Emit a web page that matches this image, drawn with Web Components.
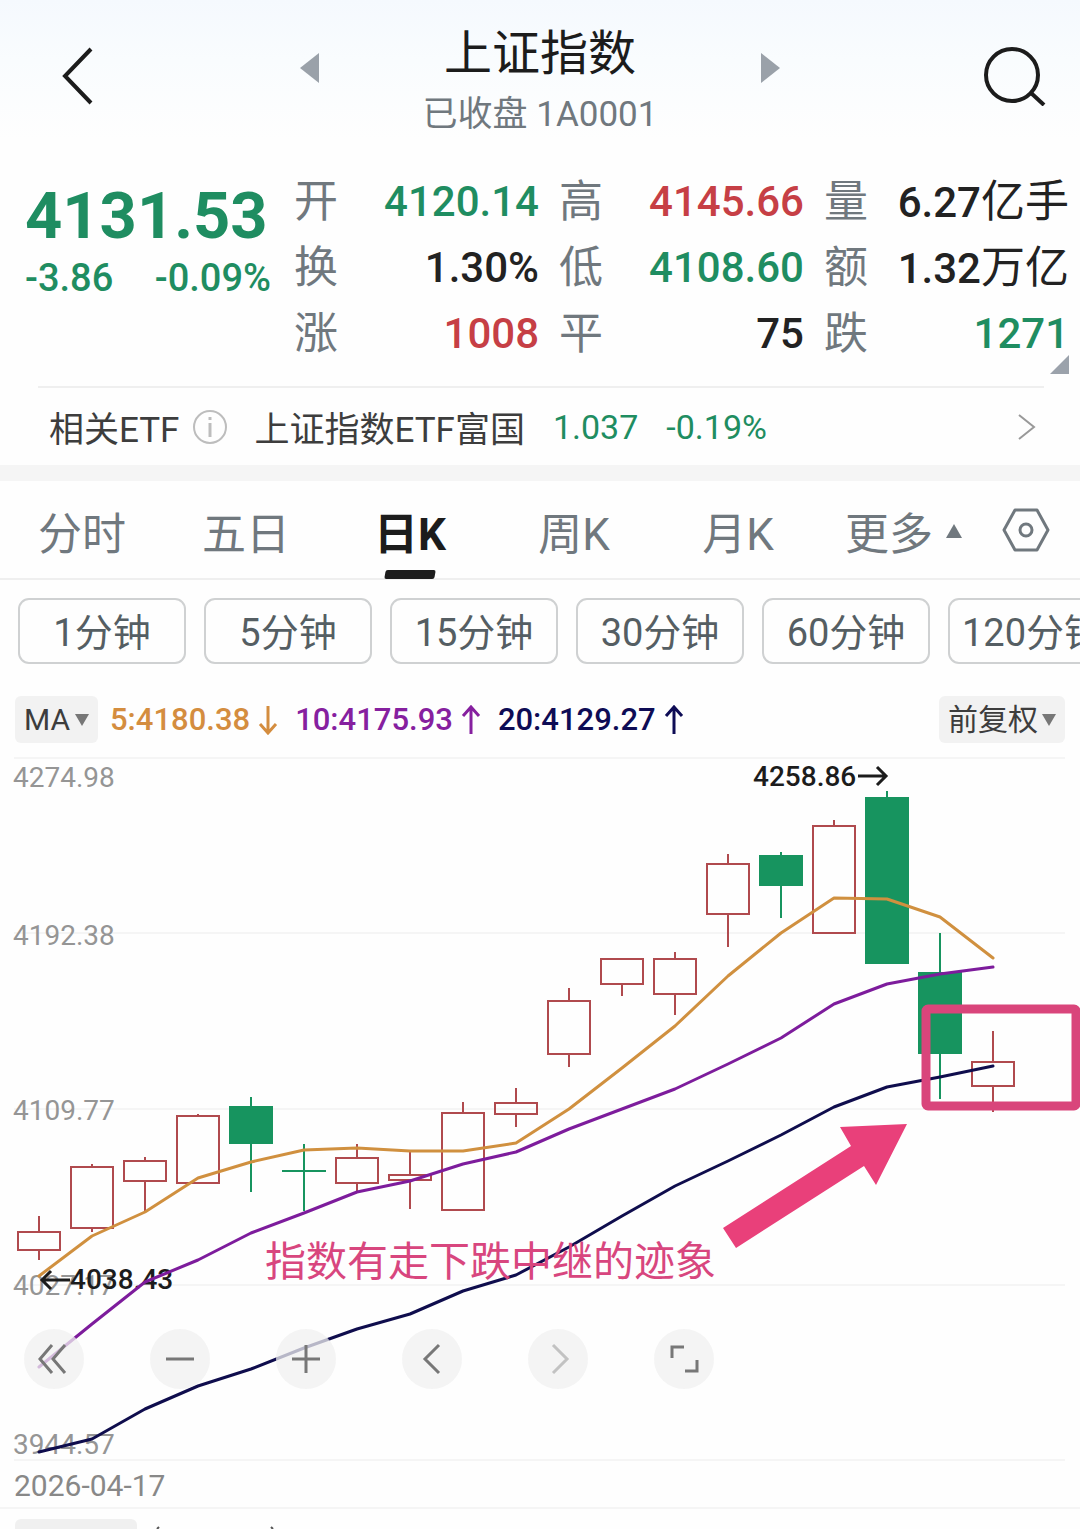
<!DOCTYPE html>
<html lang="zh-CN">
<head>
<meta charset="utf-8">
<meta name="viewport" content="width=device-width, initial-scale=1">
<title>上证指数</title>
<style>
  body {
    margin: 0;
    overflow-x: hidden;
    background: #fefefe;
    color: #222;
    font-family: Roboto, "Noto Sans CJK SC", sans-serif;
    --up: #c63f45;
    --down: #1f8d61;
    --muted: #70787e;
    --line: #efefef;
  }
</style>
</head>
<body>
<stock-header code="1A0001" status="已收盘">上证指数</stock-header>
<stock-quote price="4131.53" change="-3.86" percent="-0.09%">
  <quote-item label="开" tone="down">4120.14</quote-item>
  <quote-item label="高" tone="up">4145.66</quote-item>
  <quote-item label="量" unit="亿手">6.27</quote-item>
  <quote-item label="换">1.30%</quote-item>
  <quote-item label="低" tone="down">4108.60</quote-item>
  <quote-item label="额" unit="万亿">1.32</quote-item>
  <quote-item label="涨" tone="up">1008</quote-item>
  <quote-item label="平">75</quote-item>
  <quote-item label="跌" tone="down">1271</quote-item>
</stock-quote>
<etf-link price="1.037" percent="-0.19%">上证指数ETF富国</etf-link>
<period-tabs></period-tabs>
<minute-chips></minute-chips>
<ma-bar></ma-bar>
<k-chart></k-chart>
<chart-footer>2026-04-17</chart-footer>

<script>
const RESET = /* css */ `
  * { box-sizing: border-box; }
  button, select {
    margin: 0;
    padding: 0;
    border: 0;
    background: none;
    color: inherit;
    font: inherit;
    cursor: pointer;
  }
  svg { display: block; }
`;

class StockElement extends HTMLElement {
  constructor() {
    super();
    this.attachShadow({ mode: 'open' });
    this._rendered = false;
  }

  connectedCallback() {
    if (!this._rendered) {
      this._rendered = true;
      this.shadowRoot.innerHTML = `<style>${RESET}</style>${this.render()}`;
    }
  }

  attr(name) {
    return this.getAttribute(name) ?? '';
  }
}

class StockHeader extends StockElement {
  render() {
    return /* html */ `
      <style>
        :host {
          display: grid;
          grid-template-columns: 1fr 480px 1fr;
          padding: 22px 34px 23px;
          background: linear-gradient(#f5f9fe, #f9fcfe 60px, #fefefe 140px);
        }
        button { height: 108px; display: flex; align-items: center; }
        .back { padding-left: 28px; justify-self: start; }
        .search { justify-self: end; }
        nav { display: flex; justify-content: space-between; align-items: flex-start; }
        nav button { height: 92px; }
        .name { padding-top: 2px; text-align: center; }
        h1 { margin: 0; font-size: 48px; line-height: 60px; font-weight: 400; color: #1c1c1c; }
        p { margin: 0; font-size: 35px; line-height: 62px; color: var(--muted); }
      </style>
      <button class="back" aria-label="返回">
        <svg width="32" height="58" viewBox="0 0 32 58" fill="none" stroke="#1c1c1c" stroke-width="4"><path d="M29 2 3 29l26 27"/></svg>
      </button>
      <nav>
        <button aria-label="上一个"><svg width="20" height="32" viewBox="0 0 20 32" fill="#9aa1a9"><path d="M19 1v30L0 16z"/></svg></button>
        <div class="name">
          <h1><slot></slot></h1>
          <p>${this.attr('status')} ${this.attr('code')}</p>
        </div>
        <button aria-label="下一个"><svg width="20" height="32" viewBox="0 0 20 32" fill="#9aa1a9"><path d="M1 1v30l19-15z"/></svg></button>
      </nav>
      <button class="search" aria-label="搜索">
        <svg width="64" height="60" viewBox="0 0 64 60" fill="none" stroke="#1c1c1c" stroke-width="4"><circle cx="30" cy="29" r="26"/><path d="M48 46l14 13"/></svg>
      </button>
    `;
  }
}

class StockQuote extends StockElement {
  render() {
    return /* html */ `
      <style>
        :host {
          position: relative;
          display: grid;
          grid-template-columns: 249px 1fr;
          gap: 20px;
          padding: 0 11px 19px 25px;
        }
        .last { padding-top: 5px; color: var(--down); font-weight: 500; }
        .price { font-size: 65px; line-height: 84px; font-weight: 700; }
        .diff { display: flex; justify-content: space-between; padding-right: 3px; font-size: 38px; line-height: 40px; }
        .items { display: grid; grid-template-columns: repeat(3, 1fr); column-gap: 20px; }
        .more { position: absolute; right: 11px; bottom: 12px; }
      </style>
      <div class="last">
        <div class="price">${this.attr('price')}</div>
        <div class="diff"><span>${this.attr('change')}</span><span>${this.attr('percent')}</span></div>
      </div>
      <div class="items"><slot></slot></div>
      <svg class="more" width="19" height="19" fill="#9ba2ab"><path d="M19 0v19H0z"/></svg>
    `;
  }
}

class QuoteItem extends StockElement {
  render() {
    const color = this.attr('tone') ? `var(--${this.attr('tone')})` : '#222';
    const unit = this.attr('unit');
    return /* html */ `
      <style>
        :host { display: flex; justify-content: space-between; height: 66px; line-height: 66px; white-space: nowrap; }
        .label { font-size: 44px; color: var(--muted); }
        .value { font-size: 42px; font-weight: 500; color: ${color}; }
        .unit { font-size: 44px; font-weight: 400; }
      </style>
      <span class="label">${this.attr('label')}</span>
      <span class="value"><slot></slot>${unit ? `<span class="unit">${unit}</span>` : ''}</span>
    `;
  }
}

class EtfLink extends StockElement {
  render() {
    return /* html */ `
      <style>
        :host { display: block; border-bottom: 16px solid #f5f5f5; }
        a {
          display: flex;
          align-items: center;
          height: 79px;
          padding: 2px 44px 0 49px;
          color: #3d3d3d;
          font-size: 35px;
          text-decoration: none;
          position: relative;
        }
        a::before {
          content: "";
          position: absolute;
          inset: 0 36px auto 38px;
          border-top: 2px solid var(--line);
        }
        .info { margin: 0 26px 0 13px; }
        .num { margin-left: 28px; font-size: 34px; color: var(--down); }
        .go { margin-left: auto; }
      </style>
      <a href="#etf">
        <span>相关ETF</span>
        <svg class="info" width="36" height="36" viewBox="0 0 36 36" fill="none" stroke="#bdbdbd" stroke-width="2"><circle cx="18" cy="18" r="16"/><path d="M18 14v14M18 8v3" stroke-width="3"/></svg>
        <span><slot></slot></span>
        <span class="num">${this.attr('price')}</span>
        <span class="num">${this.attr('percent')}</span>
        <svg class="go" width="18" height="28" viewBox="0 0 18 28" fill="none" stroke="#999" stroke-width="2"><path d="M1 2l15 12L1 26"/></svg>
      </a>
    `;
  }
}

class PeriodTabs extends StockElement {
  render() {
    const tabs = ['分时', '五日', '日K', '周K', '月K'];
    return /* html */ `
      <style>
        :host {
          display: grid;
          grid-template-columns: repeat(5, 1fr) 260px;
          height: 97px;
          border-bottom: 2px solid var(--line);
          font-size: 44px;
          color: var(--muted);
        }
        .tab { display: flex; flex-direction: column; align-items: center; height: 98px; line-height: 108px; }
        .tab[aria-selected="true"] { color: #1c1c1c; font-weight: 700; }
        .tab[aria-selected="true"]::after {
          content: "";
          width: 50px;
          height: 9px;
          margin-top: -19px;
          flex: none;
          border-radius: 2px;
          background: #1c1c1c;
          transform: skewX(-10deg);
        }
        .end { display: flex; justify-content: space-between; align-items: center; padding: 0 30px 0 25px; }
        .more { display: flex; align-items: center; gap: 13px; padding-top: 2px; }
      </style>
      ${tabs.map((t) => `<button class="tab" role="tab" aria-selected="${t === '日K'}">${t}</button>`).join('')}
      <div class="end">
        <button class="more">更多<svg width="16" height="14" fill="#70787e"><path d="M8 0l8 14H0z"/></svg></button>
        <button aria-label="设置">
          <svg width="48" height="44" viewBox="0 0 48 44" fill="none" stroke="#70787e" stroke-width="3"><path d="M13 2h22l11 20-11 20H13L2 22z" stroke-linejoin="round"/><circle cx="24" cy="22" r="6"/></svg>
        </button>
      </div>
    `;
  }
}

class MinuteChips extends StockElement {
  render() {
    return /* html */ `
      <style>
        :host { display: flex; gap: 18px; padding: 18px 0 32px 18px; overflow: hidden; }
        button {
          flex: none;
          width: 168px;
          height: 66px;
          padding-top: 4px;
          border: 2px solid #cfd1d2;
          border-radius: 11px;
          font-size: 38px;
          line-height: 58px;
          color: #555e63;
          white-space: nowrap;
        }
      </style>
      ${[1, 5, 15, 30, 60, 120].map((n) => `<button>${n}分钟</button>`).join('')}
    `;
  }
}

class MaBar extends StockElement {
  render() {
    const arrows = { up: 'M10 29V2M2 11l8-9 8 9', down: 'M10 1v27M2 19l8 9 8-9' };
    const item = (text, color, dir) => `
      <span class="ma" style="color: ${color}">${text}
        <svg width="20" height="30" viewBox="0 0 20 30" fill="none" stroke="currentColor" stroke-width="3"><path d="${arrows[dir]}"/></svg>
      </span>`;
    const caret = '<svg width="14" height="12" fill="#777"><path d="M0 0h14L7 12z"/></svg>';
    return /* html */ `
      <style>
        :host { display: flex; align-items: center; gap: 12px; padding: 0 15px 14px; }
        .pick {
          display: flex;
          align-items: center;
          gap: 4px;
          height: 47px;
          padding: 0 9px;
          border-radius: 6px;
          background: #f2f2f2;
          color: #3d3d3d;
          font-size: 30px;
        }
        .pick:last-child { margin-left: auto; }
        select { appearance: none; line-height: 46px; }
        .averages { display: flex; gap: 17px; }
        .ma { display: flex; align-items: center; gap: 8px; font-size: 31px; font-weight: 500; }
      </style>
      <label class="pick"><select aria-label="指标"><option>MA</option></select>${caret}</label>
      <div class="averages">
        ${item('5:4180.38', '#d48d3f', 'down')}
        ${item('10:4175.93', '#86209f', 'up')}
        ${item('20:4129.27', '#0e0c55', 'up')}
      </div>
      <label class="pick"><select aria-label="复权"><option>前复权</option></select>${caret}</label>
    `;
  }
}

// one entry per day: high, body top, body bottom, low, falling
const CANDLES = [
  [459, 475, 493, 503], [407, 410, 471, 475], [400, 404, 424, 454], [357, 359, 426, 426],
  [340, 349, 387, 435, 1], [387, 413, 415, 454, 1], [387, 401, 426, 434], [394, 418, 423, 452],
  [345, 356, 453, 453], [331, 346, 357, 370], [231, 244, 297, 310], [202, 202, 227, 239],
  [195, 202, 237, 258], [97, 107, 157, 190], [95, 98, 129, 161, 1], [63, 69, 176, 176],
  [34, 40, 207, 207, 1], [176, 215, 297, 342, 1], [274, 305, 329, 355],
];

const AVERAGES = {
  '#d0903f': [519, 479, 455, 421, 405, 393, 391, 394, 394, 386, 352, 311, 269, 219, 176, 141, 142, 160, 201],
  '#7d1c9c': [610, 567, 525, 503, 476, 456, 435, 424, 407, 395, 372, 352, 332, 307, 281, 247, 227, 217, 210],
  '#0f0d4d': [695, 682, 652, 629, 612, 591, 572, 557, 534, 518, 490, 459, 429, 404, 378, 350, 330, 320, 309],
};

// label, baseline
const PRICES = [['4274.98', 30], ['4192.38', 188], ['4109.77', 363], ['4027.17', 538], ['3944.57', 697]];

const STEP = 53;
const dayX = (i) => 39 + i * STEP;

class KChart extends StockElement {
  candle([high, top, bottom, low, falling], i) {
    const x = dayX(i);
    const color = falling ? '#17945f' : '#b04a4e';
    const body = falling
      ? `<rect x="${x - 22}" y="${top}" width="44" height="${bottom - top}" fill="${color}" stroke="none"/>`
      : `<rect x="${x - 21}" y="${top}" width="42" height="${bottom - top}" fill="none"/>`;
    return `<g stroke="${color}" stroke-width="2"><path d="M${x} ${high}V${top}M${x} ${bottom}V${low}"/>${body}</g>`;
  }

  average([color, values]) {
    const points = values.map((y, i) => `${dayX(i)},${y}`).join(' ');
    return `<polyline points="${points}" fill="none" stroke="${color}" stroke-width="3" stroke-linejoin="round" stroke-linecap="round"/>`;
  }

  render() {
    const tools = [
      ['最早', 'M28 16 16 30l12 14M41 16 29 30l12 14'],
      ['缩小', 'M16 30h28'],
      ['放大', 'M16 30h28M30 16v28'],
      ['向左', 'M37 16 23 30l14 14'],
      ['向右', 'M25 16l14 14-14 14'],
      ['全屏', 'M18 29V18h12M31 42h12V31'],
    ];
    return /* html */ `
      <style>
        :host { display: block; position: relative; }
        .plot { width: 100%; height: auto; }
        .axis { fill: #959595; font-size: 28px; }
        .mark { fill: #1c1c1c; font-size: 28px; font-weight: 500; }
        .note { fill: #d8467e; font-size: 41px; }
        .tools { position: absolute; left: 24px; bottom: 72px; display: flex; gap: 66px; }
        .tools button { border-radius: 50%; background: rgb(240 240 240 / 75%); color: #777; }
        .tools button:disabled { color: #c2c2c2; }
      </style>
      <svg class="plot" viewBox="0 0 1080 704">
        <path d="M14 1H1065M14 176H1065M14 352H1065M14 528H1065M14 703H1065" stroke="#f5f5f5" stroke-width="2"/>
        ${PRICES.map(([text, y]) => `<text class="axis" x="13" y="${y}">${text}</text>`).join('')}
        ${CANDLES.map((c, i) => this.candle(c, i)).join('')}
        <text class="mark" x="70" y="532">4038.43</text>
        <text class="mark" x="753" y="29">4258.86</text>
        <path d="M70 523H42M51 514l-9 9 9 9M858 19h28M877 10l9 9-9 9" fill="none" stroke="#1c1c1c" stroke-width="3"/>
        ${Object.entries(AVERAGES).map((a) => this.average(a)).join('')}
        <rect x="926" y="252" width="150" height="97" rx="2" fill="none" stroke="#d9457b" stroke-width="9"/>
        <path d="M907 367 876 428 864 409 736 491 723 471 851 389 840 370z" fill="#e9407a"/>
        <text class="note" x="265" y="519">指数有走下跌中继的迹象</text>
      </svg>
      <div class="tools">
        ${tools.map(([name, d]) => `
          <button aria-label="${name}" ${name === '向右' ? 'disabled' : ''}>
            <svg width="60" height="60" viewBox="0 0 60 60" fill="none" stroke="currentColor" stroke-width="3"><path d="${d}"/></svg>
          </button>`).join('')}
      </div>
    `;
  }
}

class ChartFooter extends StockElement {
  render() {
    return /* html */ `
      <style>
        :host { display: block; }
        .date {
          height: 48px;
          padding: 0 14px;
          border-bottom: 2px solid #f5f5f5;
          font-size: 30px;
          line-height: 50px;
          color: #888;
        }
        .next { display: flex; gap: 16px; padding: 10px 15px 0; }
        .next i { width: 122px; height: 10px; border-radius: 6px 6px 0 0; background: #f0f0f0; }
      </style>
      <div class="date"><slot></slot></div>
      <div class="next">
        <i></i>
        <svg width="124" height="10" fill="none" stroke="#555" stroke-width="2"><path d="M6 8 4 10M118 8l2 2"/></svg>
      </div>
    `;
  }
}

customElements.define('stock-header', StockHeader);
customElements.define('stock-quote', StockQuote);
customElements.define('quote-item', QuoteItem);
customElements.define('etf-link', EtfLink);
customElements.define('period-tabs', PeriodTabs);
customElements.define('minute-chips', MinuteChips);
customElements.define('ma-bar', MaBar);
customElements.define('k-chart', KChart);
customElements.define('chart-footer', ChartFooter);
</script>
</body>
</html>
